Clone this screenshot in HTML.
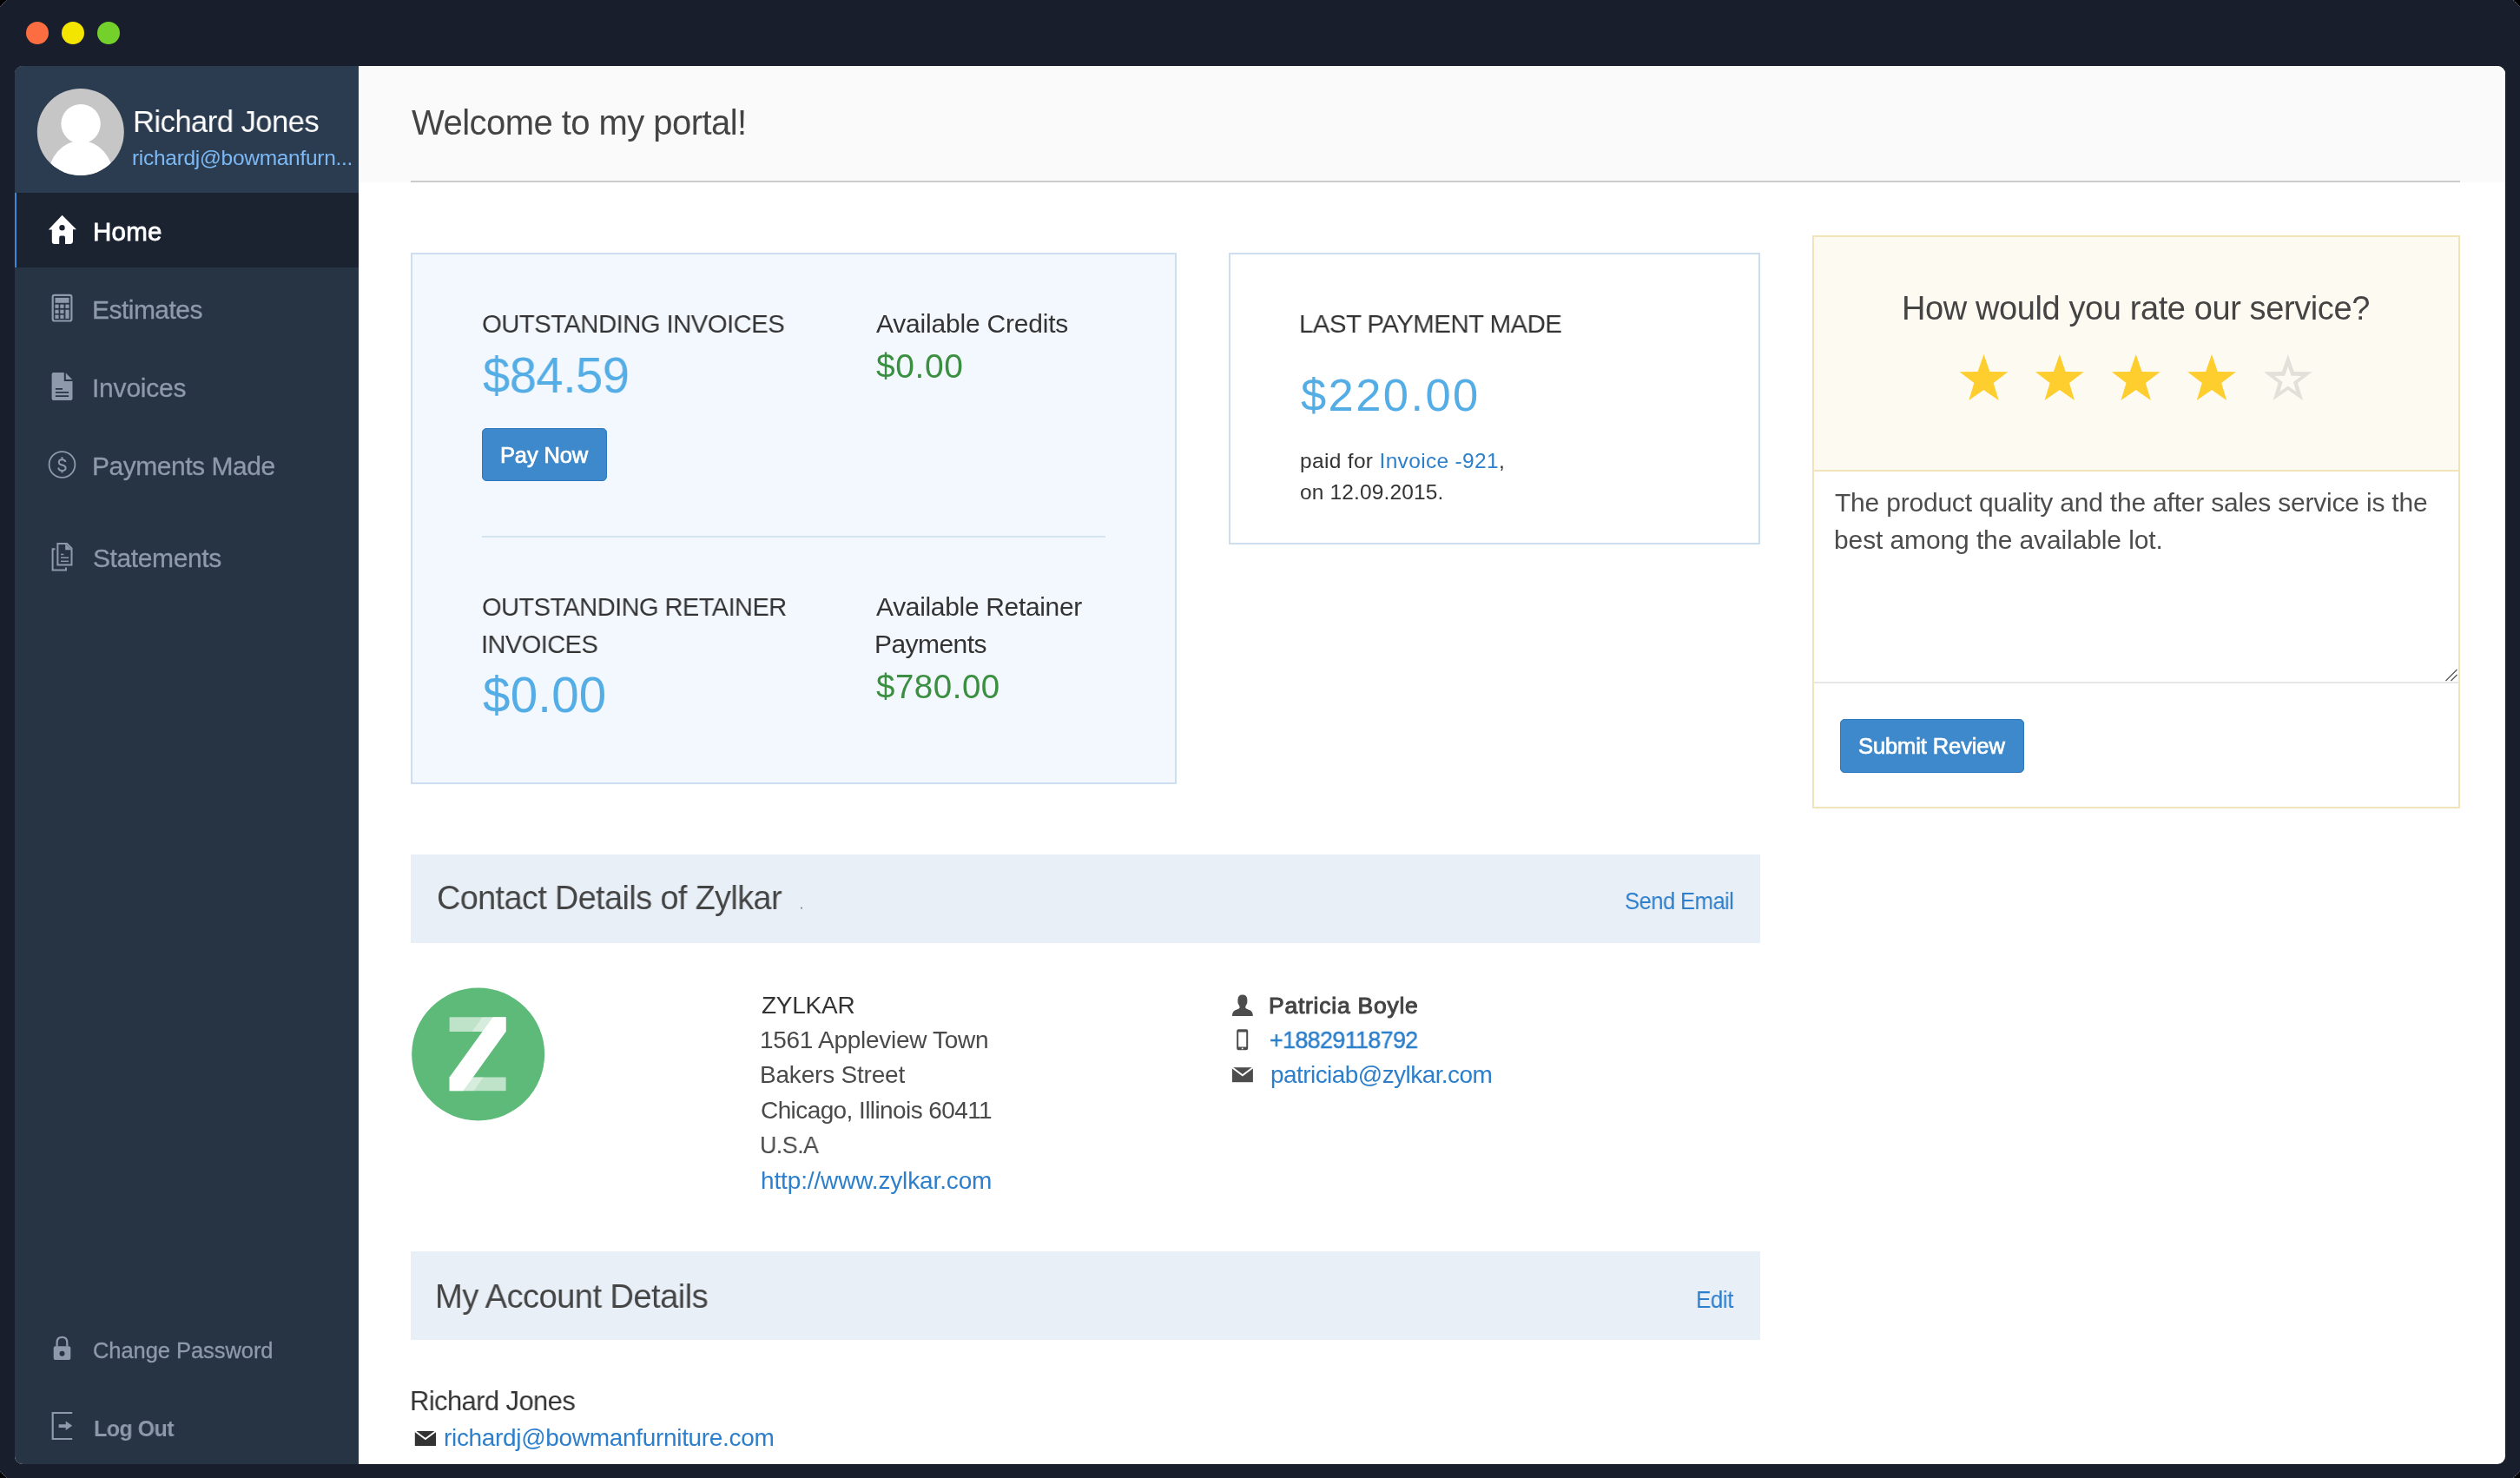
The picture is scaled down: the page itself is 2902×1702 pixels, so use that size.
<!DOCTYPE html>
<html><head><meta charset="utf-8"><title>Portal</title><style>
*{margin:0;padding:0;box-sizing:border-box}
html,body{width:2902px;height:1702px;overflow:hidden;background:#191e2c;font-family:"Liberation Sans",sans-serif}
.a{position:absolute}
.t{position:absolute;white-space:nowrap;line-height:1;font-family:"Liberation Sans",sans-serif;transform-origin:0 0;will-change:transform}
.ov{position:absolute;left:0;top:0}
</style></head>
<body>

<div class="a" style="left:17px;top:76px;width:2868px;height:1610px;background:#ffffff;border-radius:9px;overflow:hidden">
  <div class="a" style="left:0;top:0;width:396px;height:1610px;background:#263444"></div>
  <div class="a" style="left:0;top:0;width:396px;height:146px;background:#2c3c50"></div>
  <div class="a" style="left:0;top:146px;width:396px;height:86px;background:#1b2230;border-left:2px solid #3a8ad8"></div>
  <div class="a" style="left:396px;top:0;width:2472px;height:134px;background:#fafafa"></div>
</div>
<div class="a" style="left:473px;top:208px;width:2360px;height:2px;background:#cbcbcb"></div>
<div class="a" style="left:473px;top:291px;width:882px;height:612px;background:#f3f8fe;border:2px solid #cddef0"></div>
<div class="a" style="left:555px;top:617px;width:718px;height:2px;background:#d5e4f1"></div>
<div class="a" style="left:555px;top:493px;width:144px;height:61px;background:#3e89cc;border:1px solid #2f78bd;border-radius:5px"></div>
<div class="a" style="left:1415px;top:291px;width:612px;height:336px;background:#ffffff;border:2px solid #cddef0"></div>
<div class="a" style="left:2087px;top:271px;width:746px;height:660px;background:#ffffff;border:2px solid #f1e3ba"></div>
<div class="a" style="left:2089px;top:273px;width:742px;height:270px;background:#fdfaf2;border-bottom:2px solid #f1e3ba"></div>
<div class="a" style="left:2089px;top:785px;width:742px;height:2px;background:#e7e7e7"></div>
<div class="a" style="left:2119px;top:828px;width:212px;height:62px;background:#3e89cc;border:1px solid #2f78bd;border-radius:5px"></div>
<div class="a" style="left:473px;top:984px;width:1554px;height:102px;background:#e8eff7"></div>
<div class="a" style="left:473px;top:1441px;width:1554px;height:102px;background:#e8eff7"></div>


<svg class="ov" width="2902" height="1702" viewBox="0 0 2902 1702">
 <!-- window corner artifacts -->
 <path d="M0 0 L7.5 0 L0 7.5 Z" fill="#000"/>
 <path d="M2902 0 L2894.5 0 L2902 7.5 Z" fill="#000"/>
 <path d="M0 1702 L7.5 1702 L0 1694.5 Z" fill="#000"/>
 <path d="M2902 1702 L2894.5 1702 L2902 1694.5 Z" fill="#000"/>
 <g stroke="#bbbbbb" stroke-width="1" stroke-dasharray="1.2 1.2" opacity="0.8">
  <line x1="0.3" y1="7.5" x2="7.5" y2="0.3"/>
  <line x1="2894.5" y1="0.3" x2="2901.7" y2="7.5"/>
  <line x1="0.3" y1="1694.5" x2="7.5" y2="1701.7"/>
  <line x1="2894.5" y1="1701.7" x2="2901.7" y2="1694.5"/>
 </g>
 <circle cx="923" cy="1045.7" r="1.1" fill="#888"/>
 <!-- traffic lights -->
 <circle cx="43" cy="38" r="13" fill="#fc6e41"/>
 <circle cx="84" cy="38" r="13" fill="#f3e500"/>
 <circle cx="125" cy="38" r="13" fill="#74d02a"/>
 <!-- avatar -->
 <clipPath id="av"><circle cx="92.8" cy="152" r="50"/></clipPath>
 <circle cx="92.8" cy="152" r="50" fill="#c6c6c6"/>
 <g clip-path="url(#av)" fill="#ffffff">
  <circle cx="93.1" cy="142.6" r="22.7"/>
  <ellipse cx="93" cy="205.5" rx="38" ry="43.5"/>
 </g>
 <!-- home icon -->
 <g fill="#ffffff">
  <path d="M71.6 247.8 L88 264.2 L84 264.2 L84 277.6 Q84 281 80.6 281 L75 281 L75 273.5 Q75 271.6 73.1 271.6 L70.1 271.6 Q68.2 271.6 68.2 273.5 L68.2 281 L62.6 281 Q59.8 281 59.8 278 L59.8 264.4 L55.8 264.4 Z"/>
 </g>
 <circle cx="71.5" cy="262.2" r="3.2" fill="#1b2230"/>
 <!-- estimates calculator -->
 <g fill="#8e9aab">
  <rect x="60.7" y="339.9" width="21.7" height="29.6" rx="2" fill="none" stroke="#8e9aab" stroke-width="2.2"/>
  <rect x="63.5" y="342.9" width="16" height="5.9"/>
  <rect x="63.4" y="350.6" width="4.2" height="4.3"/><rect x="69.3" y="350.6" width="4.2" height="4.3"/><rect x="75.4" y="350.6" width="4.2" height="4.3"/>
  <rect x="63.4" y="356.7" width="4.2" height="4.3"/><rect x="69.3" y="356.7" width="4.2" height="4.3"/><rect x="75.4" y="356.7" width="4.2" height="10.2"/>
  <rect x="63.4" y="362.6" width="4.2" height="4.3"/><rect x="69.3" y="362.6" width="4.2" height="4.3"/>
 </g>
 <!-- invoices doc -->
 <path fill="#8e9aab" fill-rule="evenodd" d="M61.6 429 L73.8 429 L73.8 438.9 L83.5 438.9 L83.5 458.9 Q83.5 460.9 81.5 460.9 L61.6 460.9 Q59.6 460.9 59.6 458.9 L59.6 431 Q59.6 429 61.6 429 Z M63.9 447 L72 447 L72 448.8 L63.9 448.8 Z M63.9 451.1 L79.1 451.1 L79.1 452.8 L63.9 452.8 Z M63.9 455.2 L79.1 455.2 L79.1 456.9 L63.9 456.9 Z"/>
 <path fill="#8e9aab" d="M75.8 429.5 L83.2 436.9 L75.8 436.9 Z"/>
 <!-- payments dollar circle -->
 <circle cx="71.5" cy="535" r="14.9" fill="none" stroke="#8e9aab" stroke-width="1.8"/>
 <path d="M75.4 532 C75.2 530.3 73.7 529.3 71.5 529.3 C69.2 529.3 67.8 530.6 67.8 532.4 C67.8 534.5 69.8 535.1 71.6 535.5 C73.6 536 75.6 536.8 75.6 538.9 C75.6 540.8 73.9 541.9 71.5 541.9 C69.1 541.9 67.5 540.6 67.2 538.5" fill="none" stroke="#8e9aab" stroke-width="1.9"/>
 <path d="M71.5 526.3 L71.5 529.5 M71.5 541.7 L71.5 544.6" stroke="#8e9aab" stroke-width="1.9"/>
 <!-- statements -->
 <g fill="none" stroke="#8e9aab" stroke-width="2">
  <path d="M63.5 632.3 L60.6 632.3 L60.6 656.5 L76 656.5 L76 653.5"/>
  <path d="M66.4 626 L77 626 L82.5 631.5 L82.5 650.5 L66.4 650.5 Z"/>
 </g>
 <path fill="#8e9aab" d="M75.2 626 L82.5 633.3 L75.2 633.3 Z"/>
 <g fill="#8e9aab">
  <rect x="70" y="637.7" width="3.3" height="1.5"/>
  <rect x="70" y="641.5" width="9.1" height="1.5"/>
  <rect x="70" y="645.6" width="9.1" height="1.5"/>
 </g>
 <!-- lock -->
 <path d="M65.6 1550.6 L65.6 1546 Q65.6 1539.8 71.5 1539.8 Q77.3 1539.8 77.3 1546 L77.3 1550.6" fill="none" stroke="#8e9aab" stroke-width="2.3"/>
 <rect x="61.7" y="1550.3" width="19.6" height="15.6" rx="2" fill="#8e9aab"/>
 <circle cx="71.5" cy="1558.8" r="3" fill="#263444"/>
 <!-- logout -->
 <path d="M83.2 1627 L60.7 1627 L60.7 1657 L83.2 1657" fill="none" stroke="#8e9aab" stroke-width="2.2"/>
 <path fill="#8e9aab" d="M67.6 1640.2 L75.7 1640.2 L75.7 1636.5 L83.2 1641.7 L75.7 1647 L75.7 1643.9 L67.6 1643.9 Z"/>
 <!-- stars -->
 <polygon points="2284.50,408.10 2291.39,427.92 2312.37,428.35 2295.65,441.02 2301.72,461.10 2284.50,449.12 2267.28,461.10 2273.35,441.02 2256.63,428.35 2277.61,427.92" fill="#fecd2e"/><polygon points="2371.80,408.10 2378.69,427.92 2399.67,428.35 2382.95,441.02 2389.02,461.10 2371.80,449.12 2354.58,461.10 2360.65,441.02 2343.93,428.35 2364.91,427.92" fill="#fecd2e"/><polygon points="2459.70,408.10 2466.59,427.92 2487.57,428.35 2470.85,441.02 2476.92,461.10 2459.70,449.12 2442.48,461.10 2448.55,441.02 2431.83,428.35 2452.81,427.92" fill="#fecd2e"/><polygon points="2547.00,408.10 2553.89,427.92 2574.87,428.35 2558.15,441.02 2564.22,461.10 2547.00,449.12 2529.78,461.10 2535.85,441.02 2519.13,428.35 2540.11,427.92" fill="#fecd2e"/><path fill-rule="evenodd" fill="#e3e0da" d="M2634.80,408.10 L2641.69,427.92 L2662.67,428.35 L2645.95,441.02 L2652.02,461.10 L2634.80,449.12 L2617.58,461.10 L2623.65,441.02 L2606.93,428.35 L2627.91,427.92 Z M2634.80,421.88 L2638.59,432.79 L2650.13,433.02 L2640.93,439.99 L2644.27,451.04 L2634.80,444.45 L2625.33,451.04 L2628.67,439.99 L2619.47,433.02 L2631.01,432.79 Z"/>
 <!-- resize grip -->
 <g stroke="#555" stroke-width="1.3">
  <line x1="2816.5" y1="784" x2="2829.5" y2="771"/>
  <line x1="2822.5" y1="784" x2="2829.5" y2="777"/>
 </g>
 <!-- Z logo -->
 <circle cx="550.65" cy="1214" r="76.5" fill="#5dba79"/>
 <g fill="#ffffff">
  <rect x="517.6" y="1171.3" width="65" height="16.7" opacity="0.6"/>
  <rect x="517.6" y="1240.5" width="65" height="15.7" opacity="0.6"/>
  <path d="M567.6 1171.3 L582.6 1171.3 L582.6 1188 L533.4 1256.2 L517.6 1256.2 L517.6 1240.5 Z"/>
  <path d="M555.6 1171.3 L567.6 1171.3 L555.5 1188 L543.5 1188 Z" opacity="0.375"/>
  <path d="M544.7 1240.5 L556.7 1240.5 L545.4 1256.2 L533.4 1256.2 Z" opacity="0.375"/>
 </g>
 <!-- contact icons -->
 <g fill="#4d4d4d">
  <path d="M1430.9 1145.6 Q1436.2 1145.6 1436.4 1151.5 Q1436.6 1155 1435.6 1156.5 Q1434 1158.4 1434.2 1160.4 Q1434.5 1161.6 1437.4 1162.4 Q1442.9 1163.8 1442.9 1169.9 L1418.9 1169.9 Q1418.9 1163.8 1424.4 1162.4 Q1427.3 1161.6 1427.6 1160.4 Q1427.8 1158.4 1426.2 1156.5 Q1425.2 1155 1425.4 1151.5 Q1425.6 1145.6 1430.9 1145.6 Z"/>
  <path fill-rule="evenodd" d="M1426.2 1185.3 L1435.2 1185.3 Q1437.2 1185.3 1437.2 1187.3 L1437.2 1207.3 Q1437.2 1209.3 1435.2 1209.3 L1426.2 1209.3 Q1424.2 1209.3 1424.2 1207.3 L1424.2 1187.3 Q1424.2 1185.3 1426.2 1185.3 Z M1426.2 1188.6 L1426.2 1205.6 L1435.2 1205.6 L1435.2 1188.6 Z"/>
  <rect x="1418.9" y="1229.2" width="24" height="17"/>
  <path d="M1418.9 1229.2 L1430.9 1238.3 L1442.9 1229.2" fill="none" stroke="#ffffff" stroke-width="2"/>
  <rect x="477.8" y="1648" width="24.2" height="17" fill="#333333"/>
  <path d="M477.8 1648 L489.9 1657.1 L502 1648" fill="none" stroke="#ffffff" stroke-width="2"/>
 </g>
 <circle cx="1430.7" cy="1207.4" r="0.9" fill="#fff"/>
</svg>
<div class="t" style="left:153.0px;top:123.3px;font-size:35.5px;color:#ffffff;letter-spacing:-0.60px;transform:scaleX(0.9771);">Richard Jones</div>
<div class="t" style="left:152.4px;top:169.8px;font-size:24.5px;color:#7cb9f4;letter-spacing:-0.29px;">richardj@bowmanfurn...</div>
<div class="t" style="left:106.8px;top:251.6px;font-size:29.5px;color:#ffffff;-webkit-text-stroke:0.8px currentColor;letter-spacing:0.24px;">Home</div>
<div class="t" style="left:106.3px;top:342.0px;font-size:30.0px;color:#8e9aab;-webkit-text-stroke:0.3px currentColor;letter-spacing:-0.53px;">Estimates</div>
<div class="t" style="left:106.3px;top:432.0px;font-size:30.0px;color:#8e9aab;-webkit-text-stroke:0.3px currentColor;letter-spacing:-0.21px;">Invoices</div>
<div class="t" style="left:106.3px;top:522.0px;font-size:30.0px;color:#8e9aab;-webkit-text-stroke:0.3px currentColor;letter-spacing:-0.47px;">Payments Made</div>
<div class="t" style="left:107.3px;top:628.0px;font-size:30.0px;color:#8e9aab;-webkit-text-stroke:0.3px currentColor;letter-spacing:-0.39px;">Statements</div>
<div class="t" style="left:107.2px;top:1542.5px;font-size:25.5px;color:#8e9aab;-webkit-text-stroke:0.3px currentColor;letter-spacing:-0.06px;">Change Password</div>
<div class="t" style="left:107.5px;top:1632.0px;font-size:26.0px;color:#8e9aab;font-weight:700;letter-spacing:-0.60px;transform:scaleX(0.9646);">Log Out</div>
<div class="t" style="left:474.0px;top:120.5px;font-size:40.0px;color:#444444;letter-spacing:-0.55px;">Welcome to my portal!</div>
<div class="t" style="left:554.7px;top:358.0px;font-size:30.0px;color:#333333;letter-spacing:-0.60px;transform:scaleX(0.9783);">OUTSTANDING INVOICES</div>
<div class="t" style="left:556.0px;top:403.5px;font-size:57.5px;color:#55ade6;letter-spacing:-0.60px;transform:scaleX(0.9772);">$84.59</div>
<div class="t" style="left:1009.0px;top:358.0px;font-size:30.0px;color:#333333;letter-spacing:-0.20px;">Available Credits</div>
<div class="t" style="left:1009.0px;top:402.0px;font-size:39.0px;color:#3b8f41;letter-spacing:0.60px;">$0.00</div>
<div class="t" style="left:575.9px;top:512.0px;font-size:25.5px;color:#ffffff;-webkit-text-stroke:0.7px currentColor;letter-spacing:-0.15px;">Pay Now</div>
<div class="t" style="left:554.7px;top:684.4px;font-size:30.0px;color:#333333;letter-spacing:-0.60px;transform:scaleX(0.9689);">OUTSTANDING RETAINER</div>
<div class="t" style="left:553.8px;top:726.7px;font-size:30.0px;color:#333333;letter-spacing:-0.60px;transform:scaleX(0.9680);">INVOICES</div>
<div class="t" style="left:556.0px;top:772.6px;font-size:56.5px;color:#55ade6;letter-spacing:0.21px;">$0.00</div>
<div class="t" style="left:1009.0px;top:684.4px;font-size:30.0px;color:#333333;letter-spacing:-0.33px;">Available Retainer</div>
<div class="t" style="left:1007.0px;top:726.7px;font-size:30.0px;color:#333333;letter-spacing:-0.57px;">Payments</div>
<div class="t" style="left:1009.0px;top:772.0px;font-size:38.5px;color:#3b8f41;letter-spacing:0.51px;">$780.00</div>
<div class="t" style="left:1495.5px;top:358.0px;font-size:30.0px;color:#333333;letter-spacing:-0.60px;transform:scaleX(0.9826);">LAST PAYMENT MADE</div>
<div class="t" style="left:1497.5px;top:428.5px;font-size:52.5px;color:#55ade6;letter-spacing:2.40px;">$220.00</div>
<div class="t" style="left:1496.5px;top:519.0px;font-size:24.5px;color:#333333;letter-spacing:0.33px;">paid for <span style="color:#2d7fcb">Invoice -921</span>,</div>
<div class="t" style="left:1496.5px;top:555.0px;font-size:24.5px;color:#333333;letter-spacing:0.14px;">on 12.09.2015.</div>
<div class="t" style="left:2189.5px;top:335.6px;font-size:38.0px;color:#444444;letter-spacing:-0.40px;">How would you rate our service?</div>
<div class="t" style="left:2113.3px;top:564.4px;font-size:30.0px;color:#4c4c4c;letter-spacing:-0.21px;">The product quality and the after sales service is the</div>
<div class="t" style="left:2112.3px;top:606.5px;font-size:30.0px;color:#4c4c4c;letter-spacing:-0.11px;">best among the available lot.</div>
<div class="t" style="left:2139.6px;top:847.3px;font-size:25.5px;color:#ffffff;-webkit-text-stroke:0.7px currentColor;letter-spacing:-0.10px;">Submit Review</div>
<div class="t" style="left:503.4px;top:1014.9px;font-size:38.5px;color:#444444;letter-spacing:-0.60px;transform:scaleX(0.9816);">Contact Details of Zylkar</div>
<div class="t" style="left:1870.8px;top:1024.0px;font-size:27.5px;color:#2d7fcb;letter-spacing:-0.60px;transform:scaleX(0.9315);">Send Email</div>
<div class="t" style="left:876.8px;top:1143.8px;font-size:28.0px;color:#333333;letter-spacing:-0.26px;">ZYLKAR</div>
<div class="t" style="left:874.8px;top:1184.0px;font-size:28.0px;color:#4a4a4a;letter-spacing:-0.29px;">1561 Appleview Town</div>
<div class="t" style="left:874.8px;top:1224.0px;font-size:28.0px;color:#4a4a4a;letter-spacing:-0.20px;">Bakers Street</div>
<div class="t" style="left:875.8px;top:1264.5px;font-size:28.0px;color:#4a4a4a;letter-spacing:-0.59px;">Chicago, Illinois 60411</div>
<div class="t" style="left:874.9px;top:1304.5px;font-size:28.0px;color:#4a4a4a;letter-spacing:-0.60px;transform:scaleX(0.9616);">U.S.A</div>
<div class="t" style="left:875.8px;top:1345.6px;font-size:28.0px;color:#2d7fcb;letter-spacing:-0.14px;">http://www.zylkar.com</div>
<div class="t" style="left:1460.9px;top:1144.8px;font-size:26.5px;color:#444444;-webkit-text-stroke:1.0px currentColor;letter-spacing:0.75px;">Patricia Boyle</div>
<div class="t" style="left:1461.9px;top:1184.0px;font-size:27.5px;color:#2d7fcb;-webkit-text-stroke:0.5px currentColor;letter-spacing:-0.60px;transform:scaleX(0.9748);">+18829118792</div>
<div class="t" style="left:1462.6px;top:1224.0px;font-size:28.0px;color:#2d7fcb;letter-spacing:-0.56px;">patriciab@zylkar.com</div>
<div class="t" style="left:501.0px;top:1474.0px;font-size:38.5px;color:#444444;letter-spacing:-0.60px;transform:scaleX(0.9919);">My Account Details</div>
<div class="t" style="left:1952.6px;top:1483.3px;font-size:28.0px;color:#2d7fcb;letter-spacing:-0.60px;transform:scaleX(0.9335);">Edit</div>
<div class="t" style="left:472.4px;top:1597.6px;font-size:31.5px;color:#333333;letter-spacing:-0.60px;transform:scaleX(0.9822);">Richard Jones</div>
<div class="t" style="left:510.7px;top:1642.3px;font-size:28.0px;color:#2d7fcb;letter-spacing:-0.32px;">richardj@bowmanfurniture.com</div>
</body></html>
